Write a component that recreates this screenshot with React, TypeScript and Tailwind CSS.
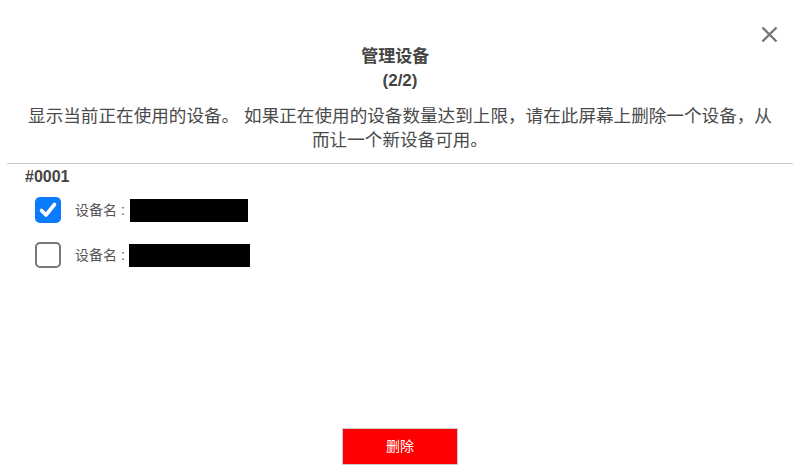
const FONT = 'font-["Liberation_Sans","Noto_Sans_CJK_SC",sans-serif]';

const Checkbox = ({ checked }: { checked: boolean }) =>
  checked ? (
    <div className="w-[26px] h-[26px] rounded-[5px] bg-[#0b7bff] flex items-center justify-center">
      <svg width="20" height="20" viewBox="0 0 20 20" fill="none">
        <path d="M3.5 10.5 L8 15 L16.5 4.5" stroke="#fff" strokeWidth="3.6" strokeLinecap="round" strokeLinejoin="round" />
      </svg>
    </div>
  ) : (
    <div className="w-[26px] h-[26px] rounded-[5px] border-2 border-[#777] bg-white" />
  );

const devices = [
  { checked: true, w: 118, ml: 'ml-[5px]' },
  { checked: false, w: 121, ml: 'ml-[4px]' },
];

export default function App() {
  return (
    <div className={`${FONT} relative w-full h-[467px] bg-white text-[#444] flex flex-col overflow-hidden`}>
      {/* close */}
      <button className="absolute top-[26px] right-[22px] w-[17px] h-[17px]">
        <svg width="17" height="17" viewBox="0 0 17 17">
          <path d="M1.5 1.5 L15.5 15.5 M15.5 1.5 L1.5 15.5" stroke="#777" strokeWidth="2.4" />
        </svg>
      </button>

      <div className="pt-[45px] text-center font-bold text-[17px] leading-[24px] text-[#444]">
        <div>管理设备&nbsp;&nbsp;</div>
        <div>(2/2)</div>
      </div>

      <p className="px-[25px] mt-[11px] text-center text-[17.6px] leading-[24px] text-[#4a4a4a]">
        显示当前正在使用的设备。 如果正在使用的设备数量达到上限，请在此屏幕上删除一个设备，从而让一个新设备可用。
      </p>

      <div className="mx-[7px] mt-[11px] border-t border-[#ccc]" />

      <div className="px-[25px] mt-[3px] font-bold text-[16px] leading-[20px] text-[#444]">#0001</div>

      <div className="pl-[35px] mt-[10px] flex flex-col gap-[19px]">
        {devices.map((d, i) => (
          <div key={i} className="flex items-center h-[26px]">
            <Checkbox checked={d.checked} />
            <span className="ml-[14px] text-[14px] text-[#555]">设备名 :</span>
            <span className={`${d.ml} h-[23px] bg-black`} style={{ width: d.w }} />
          </div>
        ))}
      </div>

      <div className="mt-auto mb-[2px] flex justify-center">
        <button className="w-[116px] h-[37px] bg-[#ff0000] border border-[#ccc] text-white text-[14px]">删除</button>
      </div>
    </div>
  );
}
